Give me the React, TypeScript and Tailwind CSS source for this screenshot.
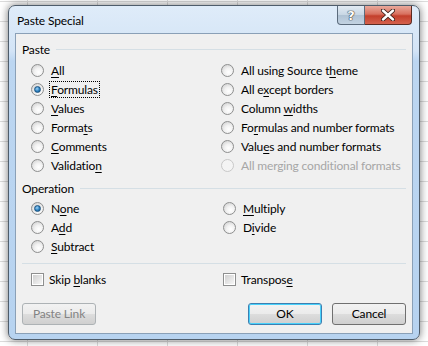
import type { ReactNode } from "react";

const font = "font-['Lato',sans-serif] tracking-[-0.15px]";

function Mn({ text, at }: { text: string; at?: number }) {
  if (at === undefined) return <>{text}</>;
  return (
    <>
      {text.slice(0, at)}
      <span className="underline underline-offset-2">{text[at]}</span>
      {text.slice(at + 1)}
    </>
  );
}

function Radio({
  label,
  at,
  checked,
  disabled,
  focus,
}: {
  label: string;
  at?: number;
  checked?: boolean;
  disabled?: boolean;
  focus?: boolean;
}) {
  return (
    <div className="flex h-[19px] items-center gap-[5px]">
      <span
        className={`flex h-[13px] w-[13px] shrink-0 items-center justify-center rounded-full border ${
          disabled
            ? "border-[#c8c8c8] bg-[#f4f4f4]"
            : "border-[#8e8f8f] bg-[radial-gradient(circle_at_60%_65%,#ffffff_0%,#f2f2f2_40%,#c8c8c8_100%)]"
        }`}
      >
        {checked && (
          <span className="h-[7px] w-[7px] rounded-full border border-[#1c5380] bg-[radial-gradient(circle_at_40%_35%,#9fd3f6,#2b80c0_55%,#13507f)]" />
        )}
      </span>
      <span
        className={`text-[12px] leading-[15px] ${
          disabled ? "text-[#a6a6a6]" : "text-black"
        } ${focus ? "border border-dotted border-black px-px" : "border border-transparent px-px"}`}
      >
        <Mn text={label} at={at} />
      </span>
    </div>
  );
}

function Check({ label, at }: { label: string; at?: number }) {
  return (
    <div className="flex h-[19px] items-center gap-[4px]">
      <span className="flex h-[13px] w-[13px] shrink-0 border border-[#8e8f8f] bg-white p-px">
        <span className="flex-1 bg-[linear-gradient(135deg,#d0d0d0,#f6f6f6)]" />
      </span>
      <span className="px-px text-[12px] leading-[15px] text-black">
        <Mn text={label} at={at} />
      </span>
    </div>
  );
}

function Header({ children }: { children: ReactNode }) {
  return (
    <div className="flex h-[16px] items-center gap-[6px] pl-[6px] pr-[6px]">
      <span className="text-[12px] leading-[15px] text-black">{children}</span>
      <span className="h-px flex-1 bg-[#d5dfe5]" />
    </div>
  );
}

function Button({
  children,
  primary,
  disabled,
}: {
  children: ReactNode;
  primary?: boolean;
  disabled?: boolean;
}) {
  return (
    <div
      className={`flex h-[22px] w-[74px] items-center justify-center rounded-[3px] border text-[12px] ${
        primary
          ? "border-[#3c7fb1] shadow-[inset_0_0_0_1px_#48d1fb] text-black"
          : disabled
            ? "border-[#adb2b5] text-[#838383]"
            : "border-[#707070] text-black"
      } bg-[linear-gradient(to_bottom,#f2f2f2_0%,#ebebeb_50%,#dddddd_51%,#cfcfcf_100%)]`}
    >
      {children}
    </div>
  );
}

export default function App() {
  return (
    <div
      className={`h-[346px] w-[428px] overflow-hidden bg-white pl-[8px] pt-[5px] ${font} [background-image:linear-gradient(#dcdcdc_1px,transparent_1px),linear-gradient(90deg,#dcdcdc_1px,transparent_1px)] [background-position:27px_1px] [background-size:70px_20px]`}
    >
      <div className="flex h-[335px] w-[412px] flex-col rounded-[7px] border border-[#4f5d6b] bg-[linear-gradient(to_bottom,#dfecf9_0px,#d3e4f6_45px,#bcd6f1_55px,#b7d3f0_100%)] px-[6px] pb-[5px] shadow-[0_0_8px_rgba(0,0,0,0.55)]">
        <div className="flex h-[27px] shrink-0 items-start">
          <span className="mt-[7px] pl-[2px] text-[12px] leading-[15px] text-black">
            Paste Special
          </span>
          <div className="ml-auto mr-[1px] flex">
            <div className="flex h-[19px] w-[28px] items-center justify-center rounded-bl-[4px] border border-t-0 border-[#5b6b7c] bg-[linear-gradient(to_bottom,#e2ebf3,#c7d6e4_50%,#afc2d4_51%,#c3d3e2)]">
              <span className="font-['DejaVu_Sans',sans-serif] text-[13px] font-bold leading-none text-white [text-shadow:0_0_1px_#333,0_0_1px_#333,0_0_1px_#333]">
                ?
              </span>
            </div>
            <div className="flex h-[19px] w-[47px] items-center justify-center rounded-br-[4px] border border-l-0 border-t-0 border-[#5b2b22] bg-[linear-gradient(to_bottom,#e9a99b,#d8705f_45%,#c33f2c_55%,#d5624d)]">
              <svg width="14" height="12" viewBox="0 0 14 12">
                <path
                  d="M2 1.5 L12 10.5 M12 1.5 L2 10.5"
                  stroke="#3a1f1a"
                  strokeWidth="4.2"
                  strokeLinecap="round"
                />
                <path
                  d="M2 1.5 L12 10.5 M12 1.5 L2 10.5"
                  stroke="#ffffff"
                  strokeWidth="2.4"
                  strokeLinecap="round"
                />
              </svg>
            </div>
          </div>
        </div>
        <div className="flex flex-1 flex-col border border-[#8aa0b7] bg-[#f0f0f0] pt-[7px]">
          <Header>Paste</Header>
          <div className="mt-[4px] grid grid-cols-[190px_1fr] pl-[15px]">
            <div className="flex flex-col">
              <Radio label="All" at={0} />
              <Radio label="Formulas" at={0} checked focus />
              <Radio label="Values" at={0} />
              <Radio label="Formats" at={5} />
              <Radio label="Comments" at={0} />
              <Radio label="Validation" at={9} />
            </div>
            <div className="flex flex-col">
              <Radio label="All using Source theme" at={18} />
              <Radio label="All except borders" at={5} />
              <Radio label="Column widths" at={7} />
              <Radio label="Formulas and number formats" at={2} />
              <Radio label="Values and number formats" at={4} />
              <Radio label="All merging conditional formats" disabled />
            </div>
          </div>
          <div className="mt-[5px]">
            <Header>Operation</Header>
          </div>
          <div className="mt-[3px] grid grid-cols-[192px_1fr] pl-[15px]">
            <div className="flex flex-col">
              <Radio label="None" at={1} checked />
              <Radio label="Add" at={1} />
              <Radio label="Subtract" at={0} />
            </div>
            <div className="flex flex-col">
              <Radio label="Multiply" at={0} />
              <Radio label="Divide" at={1} />
            </div>
          </div>
          <div className="mx-[6px] mt-[7px] h-px bg-[#d5dfe5]" />
          <div className="mt-[6px] grid grid-cols-[192px_1fr] pl-[15px]">
            <Check label="Skip blanks" at={5} />
            <Check label="Transpose" at={8} />
          </div>
          <div className="mt-[14px] flex px-[6px]">
            <Button disabled>Paste Link</Button>
            <div className="ml-auto flex gap-[10px]">
              <Button primary>OK</Button>
              <Button>Cancel</Button>
            </div>
          </div>
        </div>
      </div>
    </div>
  );
}
